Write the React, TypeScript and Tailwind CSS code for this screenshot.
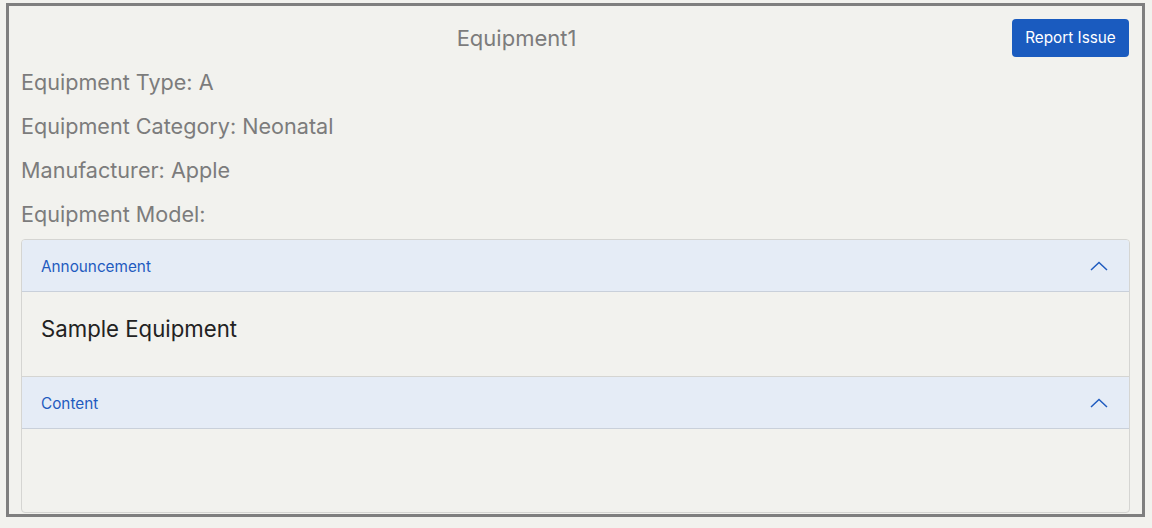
import React from "react";

function Chevron() {
  return (
    <svg width="18" height="10" viewBox="0 0 18 10" fill="none" className="block">
      <polyline points="1,9 9,1.5 17,9" stroke="#1f5bbf" strokeWidth="1.5" fill="none" />
    </svg>
  );
}

export default function App() {
  const font = { fontFamily: "Inter, 'Noto Sans', sans-serif" };
  return (
    <div className="w-[1152px] h-[528px] bg-[#f2f2ee] pt-[3px] pl-[6px]" style={font}>
      <div className="w-[1139px] h-[514px] border-[3px] border-[#7f7f7f] bg-[#f2f2ee] px-[12px] pt-[13px] overflow-hidden flex flex-col">
        <div className="flex items-center h-[38px]">
          <div className="flex-1 text-center text-[22px] text-[#7c7c7c]">Equipment1</div>
          <button className="h-[38px] w-[117px] rounded-[4px] bg-[#1a5bbf] text-white text-[15.3px] flex items-center justify-center mr-px">
            Report Issue
          </button>
        </div>
        <div className="mt-[3px] flex flex-col text-[21.6px] text-[#7c7c7c]">
          <div className="h-[44px] flex items-center">Equipment Type: A</div>
          <div className="h-[44px] flex items-center">Equipment Category: Neonatal</div>
          <div className="h-[44px] flex items-center">Manufacturer: Apple</div>
          <div className="h-[44px] flex items-center">Equipment Model:</div>
        </div>
        <div className="mt-[3px] w-[1109px] border border-[#d5d5d2] rounded-[4px] overflow-hidden flex flex-col">
          <div className="h-[52px] bg-[#e5ecf6] border-b border-[#c9d0da] flex items-center justify-between pl-[19px] pr-[21px]">
            <span className="text-[15.3px] text-[#1f5bbf] pt-[3px]">Announcement</span>
            <Chevron />
          </div>
          <div className="h-[85px] border-b border-[#d5d5d2] pl-[19px] pt-[20px]">
            <span className="text-[22.2px] text-[#222222]">Sample Equipment</span>
          </div>
          <div className="h-[52px] bg-[#e5ecf6] border-b border-[#c9d0da] flex items-center justify-between pl-[19px] pr-[21px]">
            <span className="text-[15.3px] text-[#1f5bbf] pt-[3px]">Content</span>
            <Chevron />
          </div>
          <div className="h-[83px]"></div>
        </div>
      </div>
    </div>
  );
}
